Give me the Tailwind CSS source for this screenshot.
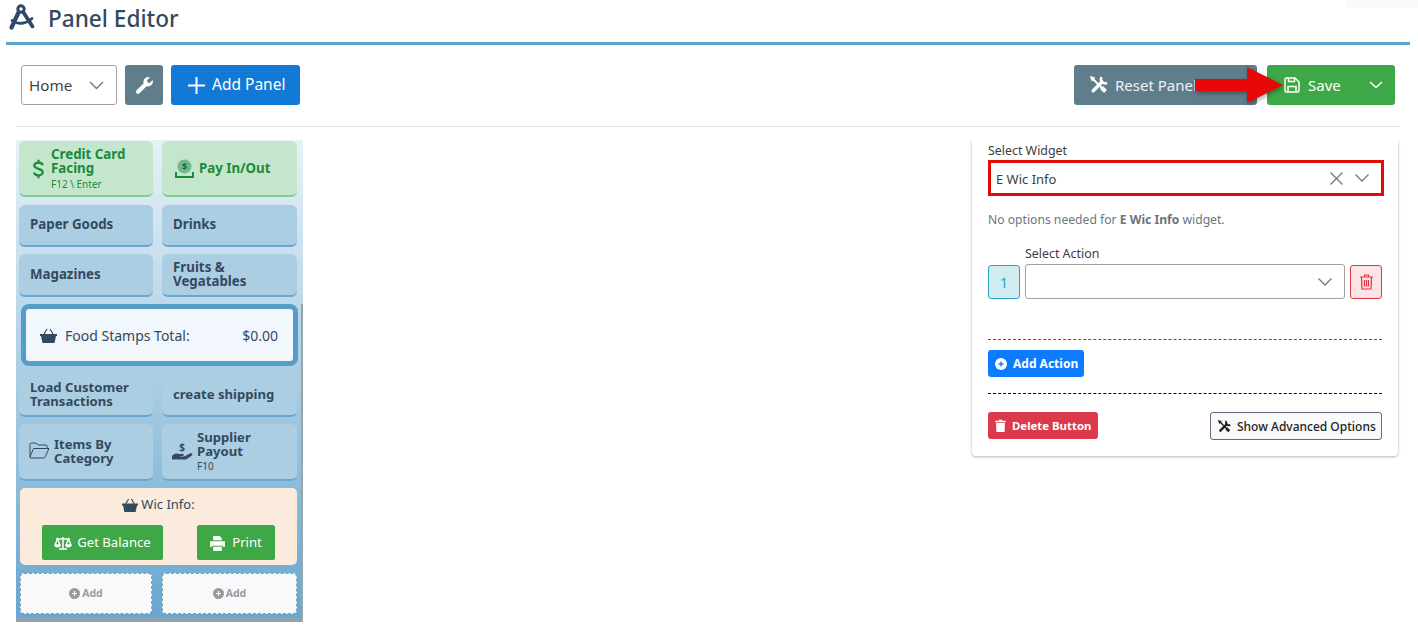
<!DOCTYPE html>
<html lang="en">
<head>
  <meta charset="UTF-8" />
  <title>Panel Editor</title>
  <script src="https://cdn.jsdelivr.net/npm/@tailwindcss/browser@4"></script>
</head>
<body class="bg-white h-[627px] w-[1418px] overflow-hidden font-['Noto_Sans',sans-serif] text-[#34495e] relative">
  <!-- header -->
  <div class="ml-[6px] w-[1404px] h-[45px] border-b-[3px] border-[#5ba3cd] flex items-start pl-[2px]">
    <svg class="w-[28px] h-[28px] mt-[3px]" viewBox="0 0 28 28" fill="none" stroke="#2f4a66" stroke-linecap="round"><circle cx="13" cy="6" r="3.200" stroke-width="3"/><path d="M10.500 9.500L3.500 24.500" stroke-width="4.200"/><path d="M15.500 9.500L24.500 23.500" stroke-width="3.800"/><path d="M4 17.500C10 22 18 21 24 15.500" stroke-width="2.800"/></svg>
    <h1 class="ml-[12px] text-[22.600px] leading-[38px] font-medium">Panel Editor</h1>
  </div>

  <!-- toolbar -->
  <div class="ml-[21px] mr-[23px] mt-[20px] h-[40px] flex items-stretch">
    <div class="w-[96px] border border-[#a3a3a3] rounded-[3px] flex items-center justify-between pl-[7px] pr-[12px] text-[15.200px] text-[#444]">
      Home
      <svg class="w-[15px] h-[9px]" viewBox="0 0 15 9" fill="none" stroke="#777" stroke-width="1.400"><path d="M1 1l6.500 6.500L14 1"/></svg>
    </div>
    <div class="ml-[8px] w-[38px] bg-[#607d8b] rounded-[3px] flex items-center justify-center">
      <svg class="w-[17px] h-[17px]" viewBox="0 0 512 512" fill="#fff"><path d="M507 109c-2-9-13-12-20-6l-74 74-68-11-11-68 74-74c7-7 3-18-6-20-47-12-99 1-136 38-39 39-50 96-34 145L18 401c-24 24-24 64 0 88s64 24 88 0l213-213c49 16 106 5 146-35 37-37 50-89 42-132z"/></svg>
    </div>
    <button class="ml-[8px] w-[129px] bg-[#1279d6] rounded-[3px] text-white text-[15.500px] flex items-center pl-[17px] gap-[7px]">
      <svg class="w-[17px] h-[17px]" viewBox="0 0 17 17" stroke="#fff" stroke-width="2"><path d="M8.500 0v17M0 8.500h17"/></svg>
      Add Panel
    </button>
    <div class="ml-auto w-[183px] bg-[#607d8b] rounded-[3px] text-white/90 text-[15px] flex items-center pl-[16px] gap-[7px]">
      <svg class="w-[18px] h-[18px]" viewBox="0 0 18 18" fill="none" stroke="#fff"><path d="M2.200 2.200L15 15" stroke-width="2"/><path d="M11.500 11.500L15.500 15.500" stroke-width="4"/><path d="M1 1l3 1-2 2z" stroke-width="1.500"/><path d="M3.200 14.800L12 6" stroke-width="3.400" stroke-linecap="round"/><path d="M11.500 1.200A4.100 4.100 0 0 0 17 6.800" stroke-width="2.600"/></svg>
      Reset Panel
    </div>
    <div class="ml-[10px] w-[128px] bg-[#3ea846] rounded-[3px] text-white text-[15px] flex items-center pl-[17px]">
      <svg class="w-[16px] h-[16px]" viewBox="0 0 16 16" fill="none" stroke="#fff" stroke-width="1.500"><path d="M1 2.500A1.500 1.500 0 0 1 2.500 1H11l4 4v8.500a1.500 1.500 0 0 1-1.500 1.500h-11A1.500 1.500 0 0 1 1 13.500z"/><path d="M4 15V9.500h8V15M4.500 1v3.500h6V1"/></svg>
      <span class="ml-[8px]">Save</span>
      <svg class="ml-auto mr-[12px] w-[14px] h-[8px]" viewBox="0 0 14 8" fill="none" stroke="#fff" stroke-width="1.500"><path d="M1 1l6 5.500L13 1"/></svg>
    </div>
  </div>

  <div class="ml-[16px] mr-[18px] mt-[21px] border-t border-[#e2e2e2]"></div>

  <!-- main -->
  <div class="ml-[16px] mr-[20px] mt-[13px] flex justify-between items-start">
    <!-- panel preview -->
    <div class="relative w-[287px] h-[482px] bg-linear-to-b from-[#e6f1f7] via-[#a9cde3] to-[#65a6cf] pl-[3px] pr-[5px] pt-[1px] flex flex-col">
      <div class="absolute right-0 top-[164px] bottom-0 w-[2px] bg-[#9aa5ab]"></div>
      <div class="absolute left-0 right-[2px] bottom-0 h-[4px] bg-[#93a2aa]"></div>

      <div class="grid grid-cols-[134px_135px] gap-x-[9px]">
        <div class="h-[56px] bg-[#c4e6cd] border-b-2 border-[#7fd08f] rounded-[6px] flex items-center pl-[14px] pt-[2px] text-[#1b8a3a]">
          <svg class="w-[11px] h-[20px] shrink-0" viewBox="0 0 13 22" fill="none" stroke="#1b8a3a" stroke-width="2.600"><path d="M11.500 6.500C11 4.500 9 3.500 6.500 3.500S1.500 5 1.500 7s2 3 5 3.800 5 1.800 5 4-2.300 3.700-5 3.700-4.800-1-5.300-3.300M6.500 0v3M6.500 19v3"/></svg>
          <div class="ml-[7px]">
            <div class="text-[13.300px] leading-[14px] font-bold">Credit Card<br>Facing</div>
            <div class="text-[10px] leading-[14px] mt-[2px]">F12 \ Enter</div>
          </div>
        </div>
        <div class="h-[56px] bg-[#c4e6cd] border-b-2 border-[#7fd08f] rounded-[6px] flex items-center pl-[13px] pt-[2px] text-[#1b8a3a]">
          <svg class="w-[19px] h-[20px] shrink-0" viewBox="0 0 19 20"><circle cx="9.500" cy="7.500" r="7" fill="#72b98a"/><text x="9.500" y="11" text-anchor="middle" font-size="9" font-weight="700" fill="#1b6a35">$</text><path d="M1 13v5h17v-5" fill="none" stroke="#1b8a3a" stroke-width="2"/></svg>
          <span class="ml-[5px] text-[13.300px] font-bold">Pay In/Out</span>
        </div>
      </div>

      <div class="mt-[8px] grid grid-cols-[134px_135px] gap-x-[9px] gap-y-[7px] text-[13.300px] leading-[14px] font-bold">
        <div class="h-[42px] bg-[#accee3] border-b-2 border-[#67a7d0] rounded-[6px] flex items-center pl-[11px] pb-[2px]">Paper Goods</div>
        <div class="h-[42px] bg-[#accee3] border-b-2 border-[#67a7d0] rounded-[6px] flex items-center pl-[11px] pb-[2px]">Drinks</div>
        <div class="h-[43px] bg-[#accee3] border-b-2 border-[#67a7d0] rounded-[6px] flex items-center pl-[11px] pb-[2px]">Magazines</div>
        <div class="h-[43px] bg-[#accee3] border-b-2 border-[#67a7d0] rounded-[6px] flex items-center pl-[11px] pb-[2px]">Fruits &amp;<br>Vegatables</div>
      </div>

      <div class="mt-[7px] ml-[2px] w-[277px] h-[62px] bg-[#f1f7fd] border-[5px] border-[#559dc9] rounded-[8px] flex items-center pl-[14px] pr-[15px] text-[14px] font-normal">
        <svg class="w-[17px] h-[15px]" viewBox="0 0 17 15" fill="#34495e"><path d="M0 6h17v2h-1l-1.500 7h-12L1 8H0z"/><path d="M4 6l3-5M13 6l-3-5" stroke="#34495e" stroke-width="1.200" fill="none"/></svg>
        <span class="ml-[8px]">Food Stamps Total:</span>
        <span class="ml-auto">$0.00</span>
      </div>

      <div class="mt-[8px] grid grid-cols-[134px_135px] gap-x-[9px] gap-y-[7px] text-[13.100px] leading-[14px] font-bold">
        <div class="h-[43px] bg-[#accee3] border-b-2 border-[#67a7d0] rounded-[6px] flex items-center pl-[11px] pb-[2px]">Load Customer<br>Transactions</div>
        <div class="h-[43px] bg-[#accee3] border-b-2 border-[#67a7d0] rounded-[6px] flex items-center pl-[11px] pb-[2px]">create shipping</div>
        <div class="h-[57px] bg-[#accee3] border-b-2 border-[#67a7d0] rounded-[6px] flex items-center pl-[10px] pb-[2px]">
          <svg class="w-[21px] h-[17px] shrink-0" viewBox="0 0 21 17" fill="none" stroke="#34495e" stroke-width="1"><path d="M1 15V2.500A1.500 1.500 0 0 1 2.500 1h4.500l2 2h8a1 1 0 0 1 1 1v2.500"/><path d="M1 15l3.500-8.500H20L16 15.500a1 1 0 0 1-1 .5H2a1 1 0 0 1-1-1z"/></svg>
          <span class="ml-[4px]">Items By<br>Category</span>
        </div>
        <div class="h-[57px] bg-[#accee3] border-b-2 border-[#67a7d0] rounded-[6px] flex items-center pl-[10px]">
          <svg class="w-[21px] h-[19px] shrink-0" viewBox="0 0 21 19" fill="#34495e"><text x="10" y="9" text-anchor="middle" font-size="10" font-weight="700">$</text><path d="M0 14c2-3 5-3 7-2h4c1 0 1 2 0 2H8v.5h4l6-3c2-1 3 1 2 2l-6 4H0z"/></svg>
          <div class="ml-[4px]">
            <div>Supplier<br>Payout</div>
            <div class="text-[10px] leading-[14px] font-normal mt-[1px]">F10</div>
          </div>
        </div>
      </div>

      <div class="mt-[7px] ml-[1px] w-[277px] h-[77px] bg-[#faebdc] rounded-[5px] flex flex-col items-center">
        <div class="mt-[7px] h-[20px] flex items-center text-[13px] gap-[3px]">
          <svg class="w-[16px] h-[14px]" viewBox="0 0 17 15" fill="#34495e"><path d="M0 6h17v2h-1l-1.500 7h-12L1 8H0z"/><path d="M4 6l3-5M13 6l-3-5" stroke="#34495e" stroke-width="1.200" fill="none"/></svg>
          Wic Info:
        </div>
        <div class="mt-[10px] w-full pl-[22px] pr-[22px] flex justify-between text-white text-[13.100px]">
          <div class="w-[121px] h-[35px] bg-[#3ea846] rounded-[2px] flex items-center justify-center gap-[5px] pt-[1px]">
            <svg class="w-[18px] h-[14px]" viewBox="0 0 18 14" fill="none" stroke="#fff" stroke-width="1.500"><path d="M2 3h14M9 1v11M5 13h8M3.500 3L1 9h5zM14.500 3L12 9h5z"/><path d="M0.500 9a3 2.500 0 0 0 6 0zM11.500 9a3 2.500 0 0 0 6 0z" fill="#fff" stroke="none"/></svg>
            Get Balance
          </div>
          <div class="w-[78px] h-[35px] bg-[#3ea846] rounded-[2px] flex items-center justify-center gap-[7px] pt-[1px]">
            <svg class="w-[15px] h-[15px]" viewBox="0 0 14 14" fill="#fff"><path d="M3 0h6l2 2v2H3zM0 5h14v5h-2V9H2v1H0zM3 10h8v4H3z"/></svg>
            Print
          </div>
        </div>
      </div>

      <div class="mt-[8px] grid grid-cols-[132px_135px] gap-x-[10px] ml-[1px] text-[10.500px] font-bold text-[#9a9a9a]">
        <div class="h-[41px] bg-[#f8f9fb] border border-dashed border-[#86a0b0] rounded-[4px] flex items-center justify-center gap-[2px]">
          <svg class="w-[11px] h-[11px]" viewBox="0 0 11 11"><circle cx="5.500" cy="5.500" r="5.500" fill="#9a9a9a"/><path d="M5.500 3v5M3 5.500h5" stroke="#f8f9fb" stroke-width="1.200"/></svg>
          Add
        </div>
        <div class="h-[41px] bg-[#f8f9fb] border border-dashed border-[#86a0b0] rounded-[4px] flex items-center justify-center gap-[2px]">
          <svg class="w-[11px] h-[11px]" viewBox="0 0 11 11"><circle cx="5.500" cy="5.500" r="5.500" fill="#9a9a9a"/><path d="M5.500 3v5M3 5.500h5" stroke="#f8f9fb" stroke-width="1.200"/></svg>
          Add
        </div>
      </div>
    </div>

    <!-- widget settings -->
    <div class="w-[426px] h-[316px] bg-white rounded-b-[4px] shadow-[0_1px_3px_rgba(0,0,0,0.3)] [clip-path:inset(0_-5px_-5px_-5px)] px-[16px] pt-[3px] text-[12px] text-[#3d3d3d]">
      <label class="block leading-[16px] text-[12.400px]">Select Widget</label>
      <div class="mt-[1px] w-[396px] h-[36px] border-[3px] border-[#e30a0a] flex items-center pl-[5px] pr-[12px] text-[13px]">
        <span class="pt-[3px]">E Wic Info</span>
        <svg class="ml-auto w-[13px] h-[13px]" viewBox="0 0 13 13" stroke="#777" stroke-width="1.300"><path d="M0.500 0.500l12 12M12.500 0.500l-12 12"/></svg>
        <svg class="ml-[12px] w-[14px] h-[8px]" viewBox="0 0 14 8" fill="none" stroke="#777" stroke-width="1.300"><path d="M0.500 0.500L7 7l6.500-6.500"/></svg>
      </div>
      <p class="mt-[16px] leading-[16px] text-[#6c757d] text-[12.150px]">No options needed for <b class="font-bold">E Wic Info</b> widget.</p>
      <label class="block mt-[18px] ml-[37px] leading-[16px] text-[12.400px]">Select Action</label>
      <div class="mt-[2px] flex items-end gap-[5px]">
        <div class="w-[32px] h-[34px] bg-[#d1ecf1] border border-[#2aa5bb] rounded-[3px] text-[#2aa5bb] text-[14px] flex items-center justify-center">1</div>
        <div class="w-[320px] h-[35px] border border-[#a3a3a3] rounded-[3px] flex items-center justify-end pr-[12px]">
          <svg class="w-[14px] h-[8px]" viewBox="0 0 14 8" fill="none" stroke="#777" stroke-width="1.300"><path d="M0.500 0.500L7 7l6.500-6.500"/></svg>
        </div>
        <div class="w-[32px] h-[34px] bg-[#fce4e6] border border-[#dc3545] rounded-[3px] flex items-center justify-center">
          <svg class="w-[13px] h-[16px]" viewBox="0 0 13 16" fill="none" stroke="#dc3545" stroke-width="1.200"><path d="M0 3h13M4.500 3V1h4v2M1.500 3l.5 12h9l.5-12M4.500 6v6.500M6.500 6v6.500M8.500 6v6.500"/></svg>
        </div>
      </div>
      <div class="mt-[40px] border-t border-dashed border-[#555]"></div>
      <button class="mt-[10px] w-[96px] h-[27px] bg-[#0d7bfd] rounded-[3px] text-white font-bold flex items-center pl-[7px] gap-[6px]">
        <svg class="w-[12px] h-[12px]" viewBox="0 0 12 12"><circle cx="6" cy="6" r="6" fill="#fff"/><path d="M6 3.500v5M3.500 6h5" stroke="#0d7bfd" stroke-width="1.300"/></svg>
        Add Action
      </button>
      <div class="mt-[16px] border-t border-dashed border-black"></div>
      <div class="mt-[18px] flex items-start justify-between">
        <button class="w-[110px] h-[27px] bg-[#dc3a4b] rounded-[3px] text-white text-[11.400px] font-bold flex items-center pl-[7px] gap-[6px]">
          <svg class="w-[11px] h-[13px]" viewBox="0 0 13 16" fill="#fff"><path d="M0 2h4.500V1h4v1H13v2H0zM1 5h11l-.5 11h-10z"/></svg>
          Delete Button
        </button>
        <button class="w-[172px] h-[28px] bg-[#f8f9fb] border border-[#5f6b76] rounded-[3px] text-[#222] flex items-center pl-[7px] pt-[1px] gap-[6px] font-medium">
          <svg class="w-[13px] h-[13px]" viewBox="0 0 18 18" fill="none" stroke="#222"><path d="M2.200 2.200L15 15" stroke-width="2"/><path d="M11.500 11.500L15.500 15.500" stroke-width="4"/><path d="M1 1l3 1-2 2z" stroke-width="1.500"/><path d="M3.200 14.800L12 6" stroke-width="3.400" stroke-linecap="round"/><path d="M11.500 1.200A4.100 4.100 0 0 0 17 6.800" stroke-width="2.600"/></svg>
          Show Advanced Options
        </button>
      </div>
    </div>
  </div>

  <!-- annotation arrow on top of the toolbar -->
  <svg class="absolute left-[1195px] top-[66px] w-[90px] h-[38px] drop-shadow-[1px_2px_2px_rgba(0,0,0,0.35)]" viewBox="0 0 90 38" fill="#e90808"><path d="M0 13h52V1l36 18-36 18V25H0z"/></svg>
  <div class="absolute left-[1345px] top-0 w-[73px] h-[8px] bg-[#fafafa]"></div>
</body>
</html>
